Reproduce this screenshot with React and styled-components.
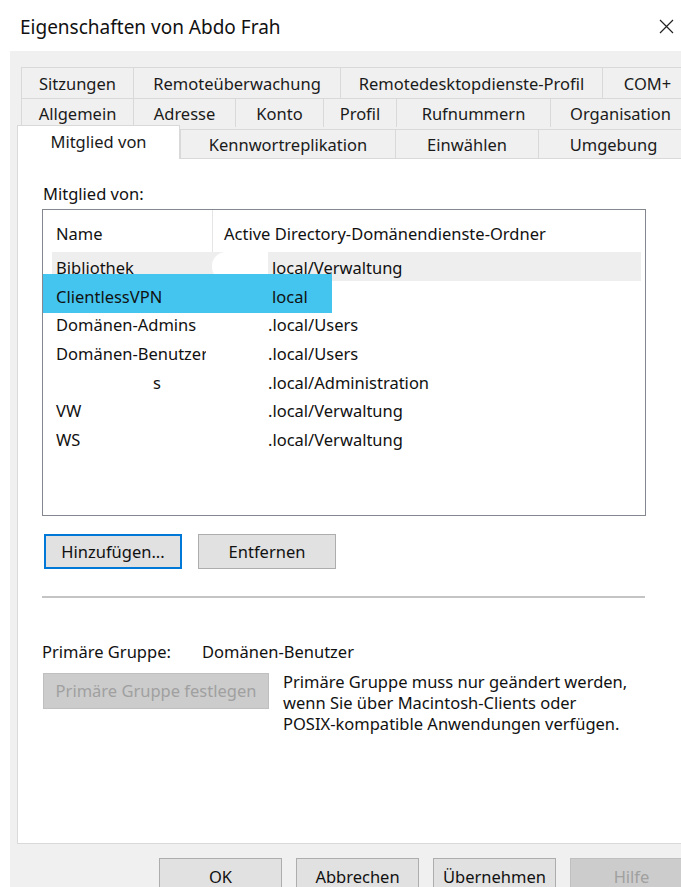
import React from "react";
import styled, { createGlobalStyle } from "styled-components";

const GlobalStyle = createGlobalStyle`
  html, body {
    margin: 0;
    padding: 0;
    background: #ffffff;
    overflow: hidden;
  }
  body {
    font-family: "Noto Sans", "Open Sans", Arial, sans-serif;
    font-size: 16.5px;
    color: #111;
  }
  * {
    box-sizing: border-box;
  }
`;

const Window = styled.div`
  width: 681px;
  height: 887px;
  display: flex;
  flex-direction: column;
  overflow: hidden;
`;

const TitleBar = styled.div`
  height: 51px;
  flex-shrink: 0;
  display: flex;
  align-items: center;
  justify-content: space-between;
  padding: 2px 7px 0 20px;
  background: #ffffff;
`;

const Title = styled.div`
  font-size: 19px;
  color: #111;
`;

const CloseButton = styled.div`
  width: 16px;
  height: 16px;
  display: flex;
  align-items: center;
  justify-content: center;
`;

const Dialog = styled.div`
  flex: 1;
  margin-left: 10px;
  width: 700px;
  background: #f0f0f0;
  padding: 16px 0 0 7px;
  display: flex;
  flex-direction: column;
`;

const TabRow = styled.div`
  display: flex;
  height: ${(p) => p.$h}px;
  margin-left: ${(p) => p.$indent}px;
  align-items: flex-end;
`;

const Tab = styled.div`
  width: ${(p) => p.$w}px;
  height: ${(p) => (p.$active ? 34 : p.$h)}px;
  flex-shrink: 0;
  display: flex;
  align-items: center;
  justify-content: center;
  padding-bottom: ${(p) => (p.$active ? 3 : 0)}px;
  background: ${(p) => (p.$active ? "#ffffff" : "#f0f0f0")};
  border-top: 1px solid #d9d9d9;
  border-left: 1px solid #d9d9d9;
  border-right: ${(p) => (p.$active ? "1px solid #d9d9d9" : "none")};
  color: #1a1a1a;
  white-space: nowrap;
  position: relative;
  z-index: ${(p) => (p.$active ? 2 : 0)};
  margin-bottom: ${(p) => (p.$active ? -1 : 0)}px;
`;

const Panel = styled.div`
  width: 676px;
  height: 686px;
  flex-shrink: 0;
  background: #ffffff;
  border: 1px solid #d9d9d9;
  padding: 0 0 0 24px;
  display: flex;
  flex-direction: column;
`;

const SectionLabel = styled.div`
  margin-top: 25px;
  line-height: 20px;
  padding-left: 1px;
`;

const ListBox = styled.div`
  margin-top: 5px;
  width: 604px;
  height: 307px;
  border: 1px solid #828790;
  background: #ffffff;
  display: flex;
  flex-direction: column;
`;

const ListHeader = styled.div`
  height: 42px;
  display: flex;
  flex-shrink: 0;
`;

const HeaderCell = styled.div`
  width: ${(p) => p.$w || "auto"};
  flex: ${(p) => (p.$w ? "none" : 1)};
  display: flex;
  align-items: center;
  padding-left: ${(p) => p.$pad}px;
  padding-top: 4px;
  border-right: ${(p) => (p.$divider ? "1px solid #e5e5e5" : "none")};
  margin-right: 4px;
  white-space: nowrap;
`;

const ListRows = styled.div`
  padding: 0 4px 0 9px;
  display: flex;
  flex-direction: column;
`;

const Row = styled.div`
  height: 28.67px;
  padding-top: 3px;
  line-height: 25px;
  display: flex;
  white-space: nowrap;
  position: relative;
  background: ${(p) => (p.$hover ? "#eeeeee" : "transparent")};

  &::before {
    content: "";
    display: ${(p) => (p.$selected ? "block" : "none")};
    position: absolute;
    left: -9px;
    top: -7px;
    bottom: -4px;
    width: 289px;
    background: #43c5f0;
  }
`;

const NameCell = styled.div`
  width: 160px;
  flex-shrink: 0;
  padding-left: ${(p) => p.$pad}px;
  position: relative;
  overflow: hidden;
`;

const Clipped = styled.span`
  display: inline-block;
  max-width: ${(p) => p.$max}px;
  overflow: hidden;
  vertical-align: top;
`;

const FolderCell = styled.div`
  flex: 1;
  display: flex;
  align-items: stretch;
  margin-top: -3px;
  position: relative;
`;

// white patch left over the hidden domain part of the folder path
const Redact = styled.span`
  width: 56px;
  flex-shrink: 0;
  background: ${(p) => (p.$show ? "#ffffff" : "transparent")};
  border-radius: 14px 0 0 14px;
`;

const FolderText = styled.span`
  padding-top: 3px;
  padding-left: ${(p) => p.$pad}px;
`;

const ButtonRow = styled.div`
  display: flex;
  gap: ${(p) => p.$gap}px;
  margin-top: ${(p) => p.$top}px;
  padding-left: ${(p) => p.$left}px;
`;

const Button = styled.div`
  width: ${(p) => p.$w}px;
  height: ${(p) => p.$h}px;
  flex-shrink: 0;
  display: flex;
  align-items: center;
  justify-content: center;
  background: ${(p) => (p.$disabled ? "#cccccc" : "#e1e1e1")};
  border: ${(p) =>
    p.$focused
      ? "2px solid #0078d7"
      : p.$disabled
      ? "1px solid #bfbfbf"
      : "1px solid #adadad"};
  color: ${(p) => (p.$disabled ? "#a0a0a0" : "#111")};
  white-space: nowrap;
`;

const Separator = styled.div`
  margin-top: 27px;
  width: 603px;
  height: 2px;
  background: #c4c4c4;
`;

const InfoRow = styled.div`
  display: flex;
  line-height: 20px;
  margin-top: ${(p) => p.$top}px;
`;

const InfoLabel = styled.div`
  width: 160px;
  flex-shrink: 0;
`;

const Description = styled.div`
  margin-left: 14px;
  margin-top: -1px;
  line-height: 21px;
`;

const FooterButtons = styled.div`
  display: flex;
  gap: 14px;
  margin-top: 14px;
  padding-left: 142px;
`;

const tabRows = [
  {
    h: 31,
    indent: 4,
    tabs: [
      ["Sitzungen", 112],
      ["Remoteüberwachung", 207],
      ["Remotedesktopdienste-Profil", 262],
      ["COM+", 90],
    ],
  },
  {
    h: 29,
    indent: 4,
    tabs: [
      ["Allgemein", 112],
      ["Adresse", 102],
      ["Konto", 88],
      ["Profil", 73],
      ["Rufnummern", 154],
      ["Organisation", 140],
    ],
  },
  {
    h: 31,
    indent: 0,
    tabs: [
      ["Mitglied von", 163, true],
      ["Kennwortreplikation", 215],
      ["Einwählen", 143],
      ["Umgebung", 150],
    ],
  },
];

const groups = [
  { name: "Bibliothek", folder: "local/Verwaltung", hover: true, redact: true, fpad: 4 },
  { name: "ClientlessVPN", folder: "local", selected: true, fpad: 4 },
  { name: "Domänen-Admins", folder: ".local/Users" },
  { name: "Domänen-Benutzer", folder: ".local/Users", clip: 150 },
  { name: "s", folder: ".local/Administration", pad: 101 },
  { name: "VW", folder: ".local/Verwaltung" },
  { name: "WS", folder: ".local/Verwaltung" },
];

const CloseIcon = () => (
  <svg width="15" height="15" viewBox="0 0 15 15">
    <path d="M1 1 L14 14 M14 1 L1 14" stroke="#222" strokeWidth="1.2" fill="none" />
  </svg>
);

export default function App() {
  return (
    <>
      <GlobalStyle />
      <Window>
        <TitleBar>
          <Title>Eigenschaften von Abdo Frah</Title>
          <CloseButton>
            <CloseIcon />
          </CloseButton>
        </TitleBar>

        <Dialog>
          {tabRows.map((row, i) => (
            <TabRow key={i} $h={row.h} $indent={row.indent}>
              {row.tabs.map(([label, w, active]) => (
                <Tab key={label} $w={w} $h={i === 2 ? 29 : row.h} $active={active}>
                  {label}
                </Tab>
              ))}
            </TabRow>
          ))}

          <Panel>
            <SectionLabel>Mitglied von:</SectionLabel>
            <ListBox>
              <ListHeader>
                <HeaderCell $w="170px" $pad={13} $divider>
                  Name
                </HeaderCell>
                <HeaderCell $pad={7}>Active Directory-Domänendienste-Ordner</HeaderCell>
              </ListHeader>
              <ListRows>
                {groups.map((g) => (
                  <Row key={g.name} $hover={g.hover} $selected={g.selected}>
                    <NameCell $pad={g.pad || 4}>
                      {g.clip ? <Clipped $max={g.clip}>{g.name}</Clipped> : g.name}
                    </NameCell>
                    <FolderCell>
                      <Redact $show={g.redact} />
                      <FolderText $pad={g.fpad || 0}>{g.folder}</FolderText>
                    </FolderCell>
                  </Row>
                ))}
              </ListRows>
            </ListBox>

            <ButtonRow $gap={16} $top={18} $left={2}>
              <Button $w={138} $h={35} $focused>
                Hinzufügen...
              </Button>
              <Button $w={138} $h={35}>
                Entfernen
              </Button>
            </ButtonRow>

            <Separator />

            <InfoRow $top={44}>
              <InfoLabel>Primäre Gruppe:</InfoLabel>
              <div>Domänen-Benutzer</div>
            </InfoRow>
            <InfoRow $top={10}>
              <ButtonRow $gap={0} $top={1} $left={1}>
                <Button $w={226} $h={36} $disabled>
                  Primäre Gruppe festlegen
                </Button>
              </ButtonRow>
              <Description>
                Primäre Gruppe muss nur geändert werden,
                <br />
                wenn Sie über Macintosh-Clients oder
                <br />
                POSIX-kompatible Anwendungen verfügen.
              </Description>
            </InfoRow>
          </Panel>

          <FooterButtons>
            <Button $w={123} $h={36}>OK</Button>
            <Button $w={123} $h={36}>Abbrechen</Button>
            <Button $w={123} $h={36}>Übernehmen</Button>
            <Button $w={123} $h={36} $disabled>Hilfe</Button>
          </FooterButtons>
        </Dialog>
      </Window>
    </>
  );
}
